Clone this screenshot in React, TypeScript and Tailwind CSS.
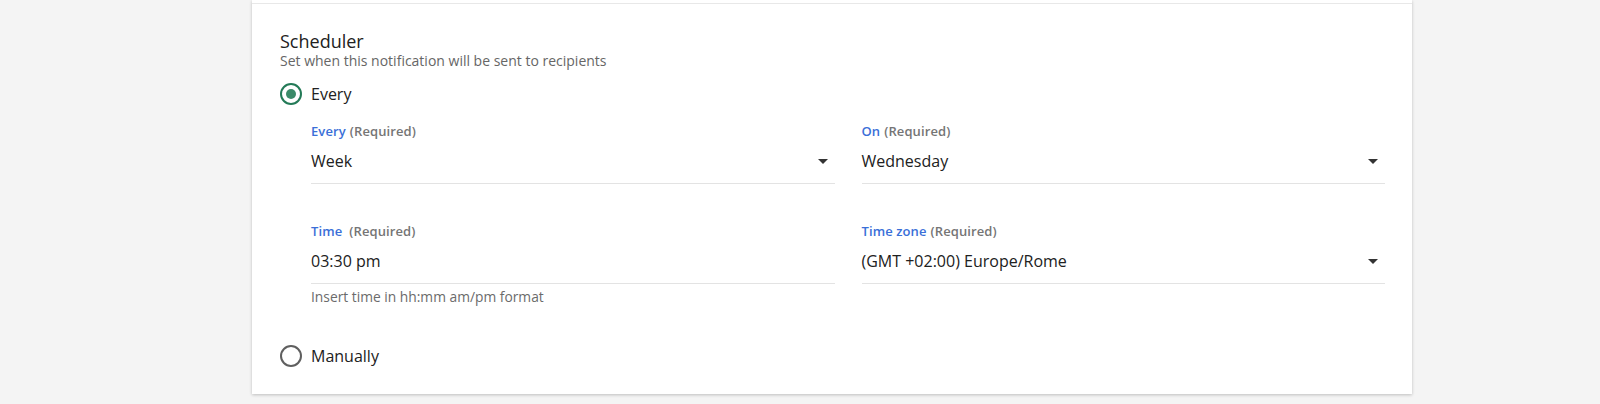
import React from 'react';

type Field = {
  label: string;
  value: string;
  select?: boolean;
  helper?: string;
  wide?: boolean;
};

const fields: Field[] = [
  { label: 'Every', value: 'Week', select: true },
  { label: 'On', value: 'Wednesday', select: true },
  { label: 'Time', value: '03:30 pm', helper: 'Insert time in hh:mm am/pm format', wide: true },
  { label: 'Time zone', value: '(GMT +02:00) Europe/Rome', select: true },
];

function Radio({ checked, label }: { checked?: boolean; label: string }) {
  return (
    <div className="flex items-center h-6 gap-[9px]">
      <span
        className={
          checked
            ? 'w-[22px] h-[22px] rounded-full border-2 border-[#237a57] flex items-center justify-center'
            : 'w-[22px] h-[22px] rounded-full border-2 border-[#5f5f5f] flex items-center justify-center'
        }
      >
        {checked && <span className="w-[10px] h-[10px] rounded-full bg-[#3a8a68]" />}
      </span>
      <span className="text-[16px] text-[#212121]">{label}</span>
    </div>
  );
}

function FormField({ f }: { f: Field }) {
  return (
    <div>
      <div className="text-[13px] leading-[18px] font-semibold tracking-[0.1px]">
        <span className="text-[#3a6fd8]">{f.label}</span>
        <span className={f.wide ? 'text-[#757575] ml-[7px]' : 'text-[#757575] ml-[4px]'}>(Required)</span>
      </div>
      <div className="flex items-center justify-between pt-[9px] pb-[10px] border-b border-[#e3e3e3]">
        <span className="text-[16px] leading-6 text-[#212121]">{f.value}</span>
        {f.select && (
          <svg width="10" height="5" viewBox="0 0 10 5" className="mr-[7px]">
            <path d="M0 0 L10 0 L5 5 Z" fill="#333" />
          </svg>
        )}
      </div>
      {f.helper && (
        <div className="mt-[4px] text-[13.8px] leading-[18px] text-[#6b6b6b]">{f.helper}</div>
      )}
    </div>
  );
}

export default function App() {
  return (
    <div className="min-h-[404px] bg-[#f4f4f4]" style={{ fontFamily: '"Open Sans", "Noto Sans", sans-serif' }}>
      <div className="ml-[252px] w-[1160px] bg-white pt-[3px] shadow-[0_1px_3px_rgba(0,0,0,0.22)]">
        <div className="border-t border-[#e8e8e8] pt-[26px] pb-[26px] pl-[28px] pr-[27px]">
          <h2 className="text-[18px] leading-[22px] text-[#212121]">Scheduler</h2>
          <p className="text-[14px] leading-[18px] text-[#666]">Set when this notification will be sent to recipients</p>

          <div className="mt-[12px]">
            <Radio checked label="Every" />
          </div>

          <div className="pl-[31px] mt-[16px] grid grid-cols-2 gap-x-[27px] gap-y-[38px]">
            {fields.map((f) => (
              <FormField key={f.label} f={f} />
            ))}
          </div>

          <div className="mt-[38px]">
            <Radio label="Manually" />
          </div>
        </div>
      </div>
    </div>
  );
}
